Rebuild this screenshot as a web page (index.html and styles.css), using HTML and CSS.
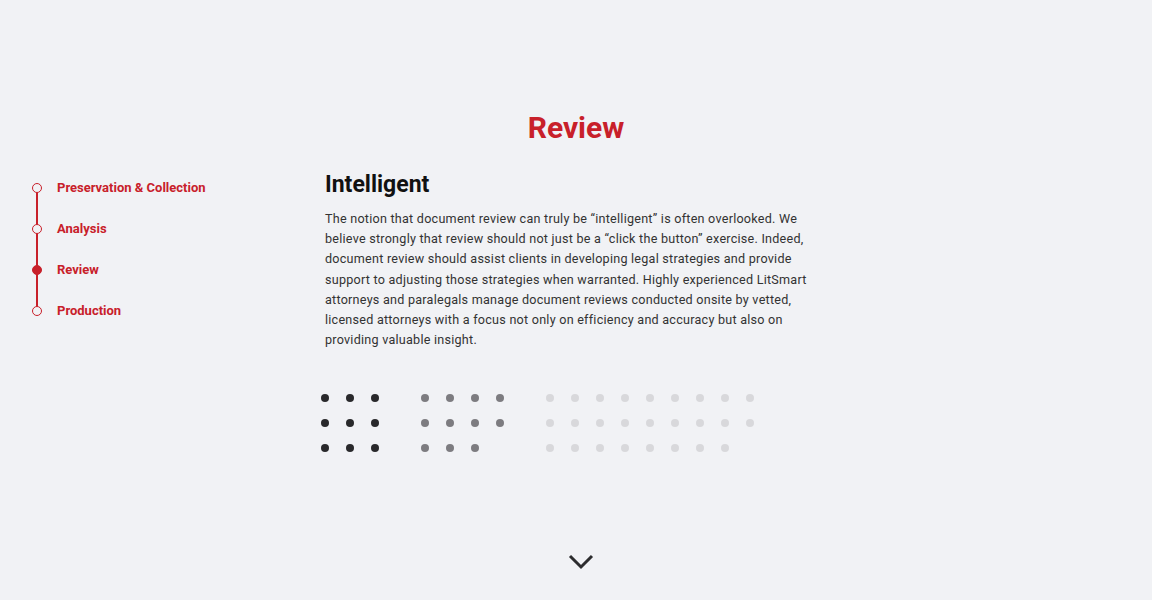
FILE: index.html
```html
<!DOCTYPE html>
<html>
<head>
<meta charset="utf-8">
<link rel="stylesheet" href="styles.css">
</head>
<body>
<div class="page">
  <h1 class="title">Review</h1>
  <div class="main">
    <nav class="steps">
      <div class="rail"></div>
      <a class="step"><span class="dot"></span>Preservation &amp; Collection</a>
      <a class="step"><span class="dot"></span>Analysis</a>
      <a class="step active"><span class="dot"></span>Review</a>
      <a class="step"><span class="dot"></span>Production</a>
    </nav>
    <section class="content">
      <h2 class="heading">Intelligent</h2>
      <p class="text">The notion that document review can truly be “intelligent” is often overlooked. We believe strongly that review should not just be a “click the button” exercise. Indeed, document review should assist clients in developing legal strategies and provide support to adjusting those strategies when warranted. Highly experienced LitSmart attorneys and paralegals manage document reviews conducted onsite by vetted, licensed attorneys with a focus not only on efficiency and accuracy but also on providing valuable insight.</p>
      <div class="dots">
        <div class="grid g3 dark">
          <i></i><i></i><i></i><i></i><i></i><i></i><i></i><i></i><i></i>
        </div>
        <div class="grid g4 mid">
          <i></i><i></i><i></i><i></i><i></i><i></i><i></i><i></i><i></i><i></i><i></i>
        </div>
        <div class="grid g9 light">
          <i></i><i></i><i></i><i></i><i></i><i></i><i></i><i></i><i></i>
          <i></i><i></i><i></i><i></i><i></i><i></i><i></i><i></i><i></i>
          <i></i><i></i><i></i><i></i><i></i><i></i><i></i><i></i>
        </div>
      </div>
    </section>
  </div>
  <div class="down">
    <svg width="26" height="16" viewBox="0 0 26 16"><path d="M2 2 L13 13 L24 2" fill="none" stroke="#2c2c2e" stroke-width="3"/></svg>
  </div>
</div>
</body>
</html>
```
FILE: styles.css
```css
html, body {
  margin: 0;
  padding: 0;
  background: #f1f2f5;
}
body {
  font-family: Roboto, "Liberation Sans", sans-serif;
  color: #222;
}
.page {
  width: 1152px;
  height: 600px;
  position: relative;
  overflow: hidden;
}
.title {
  margin: 0;
  padding-top: 110px;
  text-align: center;
  font-size: 30px;
  line-height: 36px;
  font-weight: 700;
  color: #c8202a;
}
.main {
  display: flex;
  margin-top: 15px;
}
.steps {
  position: relative;
  width: 293px;
  padding-left: 32px;
  padding-top: 20px;
  display: flex;
  flex-direction: column;
  gap: 27px;
}
.rail {
  position: absolute;
  left: 36px;
  top: 27px;
  width: 2px;
  height: 123px;
  background: #c8202a;
}
.step {
  position: relative;
  display: flex;
  align-items: center;
  gap: 15px;
  font-size: 13px;
  line-height: 14px;
  font-weight: 700;
  color: #c8202a;
  height: 14px;
}
.dot {
  width: 8px;
  height: 8px;
  border-radius: 50%;
  border: 1.3px solid #c8202a;
  background: #f1f2f5;
  flex: none;
  position: relative;
  z-index: 1;
}
.step.active .dot { background: #c8202a; }
.content {
  width: 490px;
  padding-top: 10px;
}
.heading {
  margin: 0;
  font-size: 23px;
  line-height: 28px;
  font-weight: 700;
  color: #111;
}
.text {
  margin: 10px 0 0;
  font-size: 12.6px;
  line-height: 20.2px;
  color: #333;
  letter-spacing: 0.24px;
}
.dots {
  display: flex;
  gap: 42px;
  margin-top: 44px;
  margin-left: -4px;
}
.grid {
  display: grid;
  gap: 17px;
}
.grid i {
  display: block;
  width: 8px;
  height: 8px;
  border-radius: 50%;
}
.g3 { grid-template-columns: repeat(3, 8px); }
.g4 { grid-template-columns: repeat(4, 8px); }
.g9 { grid-template-columns: repeat(9, 8px); }
.dark i { background: #29292b; }
.mid i { background: #7d7c80; }
.light i { background: #d8d8db; }
.down {
  position: absolute;
  left: 568px;
  top: 554px;
}
.down svg { display: block; }
```
